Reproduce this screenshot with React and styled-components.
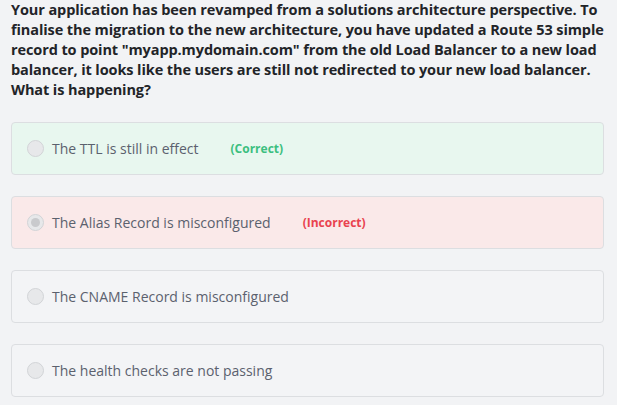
import React from 'react';
import styled, { createGlobalStyle, css } from 'styled-components';

const GlobalStyle = createGlobalStyle`
  html, body {
    margin: 0;
    padding: 0;
    background: #f2f3f5;
  }
  body {
    font-family: "Open Sans", "Noto Sans", Arial, sans-serif;
  }
`;

const Page = styled.div`
  padding: 0 13px 0 11px;
  width: 617px;
  box-sizing: border-box;
`;

const Question = styled.p`
  margin: 0 0 22px;
  font-size: 14.5px;
  font-weight: 700;
  line-height: 20px;
  color: #222428;
  letter-spacing: -0.1px;
`;

const Options = styled.div`
  display: flex;
  flex-direction: column;
  gap: 21px;
`;

const tones = {
  correct: css`
    background: #e8f7ef;
  `,
  incorrect: css`
    background: #fae9e9;
  `,
  neutral: css`
    background: #f3f4f6;
  `,
};

const Option = styled.label`
  display: flex;
  align-items: center;
  height: 53px;
  box-sizing: border-box;
  padding: 0 15px;
  border: 1px solid #dcdee1;
  border-radius: 4px;
  ${(p) => tones[p.$tone]}
`;

const Radio = styled.span`
  width: 17px;
  height: 17px;
  box-sizing: border-box;
  border-radius: 50%;
  border: 1px solid #d2d4d7;
  background: #e7e8ea;
  margin-right: 8px;
  display: flex;
  align-items: center;
  justify-content: center;
  flex-shrink: 0;

  &::after {
    content: '';
    display: ${(p) => (p.$checked ? 'block' : 'none')};
    width: 9px;
    height: 9px;
    border-radius: 50%;
    background: #c9cacd;
  }
`;

const OptionText = styled.span`
  font-size: 14px;
  color: #5b616e;
`;

const Verdict = styled.span`
  margin-left: 32px;
  font-size: 12px;
  font-weight: 700;
  color: ${(p) => (p.$ok ? '#3cbf7f' : '#e9434f')};
`;

const answers = [
  { text: 'The TTL is still in effect', tone: 'correct', verdict: '(Correct)' },
  { text: 'The Alias Record is misconfigured', tone: 'incorrect', verdict: '(Incorrect)', checked: true },
  { text: 'The CNAME Record is misconfigured', tone: 'neutral' },
  { text: 'The health checks are not passing', tone: 'neutral' },
];

const App = () => (
  <>
    <GlobalStyle />
    <Page>
      <Question>
        Your application has been revamped from a solutions architecture perspective. To
        finalise the migration to the new architecture, you have updated a Route 53 simple
        record to point "myapp.mydomain.com" from the old Load Balancer to a new load
        balancer, it looks like the users are still not redirected to your new load balancer.
        What is happening?
      </Question>
      <Options>
        {answers.map((a) => (
          <Option key={a.text} $tone={a.tone}>
            <Radio $checked={a.checked} />
            <OptionText>{a.text}</OptionText>
            {a.verdict && <Verdict $ok={a.tone === 'correct'}>{a.verdict}</Verdict>}
          </Option>
        ))}
      </Options>
    </Page>
  </>
);

export default App;
